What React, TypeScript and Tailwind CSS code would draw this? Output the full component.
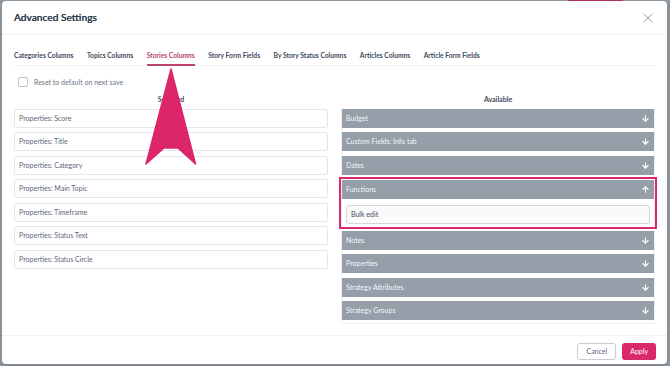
import { ArrowDown, ArrowUp, X } from 'lucide-react'

const tabs = [
  'Categories Columns',
  'Topics Columns',
  'Stories Columns',
  'Story Form Fields',
  'By Story Status Columns',
  'Articles Columns',
  'Article Form Fields',
]

const selectedFields = [
  'Properties: Score',
  'Properties: Title',
  'Properties: Category',
  'Properties: Main Topic',
  'Properties: Timeframe',
  'Properties: Status Text',
  'Properties: Status Circle',
]

const groupsBefore = ['Budget', 'Custom Fields: Info tab', 'Dates']
const groupsAfter = ['Notes', 'Properties', 'Strategy Attributes', 'Strategy Groups']

const GroupBar = ({ label, open = false }: { label: string; open?: boolean }) => (
  <div className="h-[19px] bg-[#959ea9] flex items-center justify-between pl-[4px] pr-[4px] text-[7px] text-white/95">
    <span>{label}</span>
    {open ? (
      <ArrowUp size={9} strokeWidth={3} className="text-white" />
    ) : (
      <ArrowDown size={9} strokeWidth={3} className="text-white" />
    )}
  </div>
)

export default function App() {
  return (
    <div className="relative w-[670px] h-[366px] bg-[#8e96a0] pt-px pl-[2px] font-['Lato','Open_Sans',sans-serif] overflow-hidden">
      {/* page content peeking behind the overlay */}
      <div className="absolute top-0 left-[568px] w-[55px] h-px bg-[#b0306a]" />

      <div className="relative w-[665px] h-[363px] bg-white rounded-[4px] flex flex-col shadow-md">
        {/* Header */}
        <div className="h-[34px] border-b border-[#eef0f2] flex items-center justify-between pl-[12px] pr-[11px]">
          <h1 className="text-[10.2px] font-medium text-[#2e3d4f] [text-shadow:0_0_0.3px_#2e3d4f]">Advanced Settings</h1>
          <X size={16} strokeWidth={1.3} className="text-[#8a93a0]" />
        </div>

        <div className="flex-1 px-[12px]">
          {/* Tabs */}
          <div className="mt-[15px] flex gap-[13.5px] border-b border-[#eef0f2]">
            {tabs.map((tab) => (
              <div
                key={tab}
                className={
                  tab === 'Stories Columns'
                    ? 'pb-[4px] mb-[-1px] border-b-2 border-[#b8436d] text-[#b5446c] text-[6.7px] font-bold leading-[10px]'
                    : 'pb-[5px] text-[#3d4a5c] text-[6.7px] font-bold leading-[10px]'
                }
              >
                {tab}
              </div>
            ))}
          </div>

          {/* Reset checkbox */}
          <label className="mt-[11px] ml-[4px] flex items-center gap-[6px] h-[10px]">
            <span className="w-[10px] h-[10px] border border-[#b9c0c8] rounded-[2px] bg-white" />
            <span className="text-[7px] text-[#6b7482]">Reset to default on next save</span>
          </label>

          {/* Columns */}
          <div className="mt-[7px] grid grid-cols-2 gap-[13px]">
            <div>
              <p className="text-center text-[7px] font-bold text-[#3d4a5c] leading-[10px]">Selected</p>
              <div className="mt-[4.5px] flex flex-col gap-[4.5px]">
                {selectedFields.map((field) => (
                  <div
                    key={field}
                    className="h-[19px] border border-[#e3e6ea] rounded-[2px] flex items-center px-[4px] text-[7px] text-[#5d6778]"
                  >
                    {field}
                  </div>
                ))}
              </div>
            </div>

            <div>
              <p className="text-center text-[7px] font-bold text-[#3d4a5c] leading-[10px]">Available</p>
              <div className="mt-[4.5px] border-x border-b border-[#eef0f2] pb-[3px]">
                <div className="flex flex-col gap-[4.5px]">
                  {groupsBefore.map((g) => (
                    <GroupBar key={g} label={g} />
                  ))}
                </div>

                {/* highlighted group */}
                <div className="mt-[2px] mx-[-3px] border-2 border-[#d9286b] pt-px px-px pb-[3px]">
                  <GroupBar label="Functions" open />
                  <div className="mt-[6px] mx-[4px] h-[19px] bg-[#fafafa] border border-[#d3d7dc] rounded-[3px] flex items-center px-[4px] text-[7px] text-[#3d4a5c]">
                    Bulk edit
                  </div>
                </div>

                <div className="mt-[2px] flex flex-col gap-[4.5px]">
                  {groupsAfter.map((g) => (
                    <GroupBar key={g} label={g} />
                  ))}
                </div>
              </div>
            </div>
          </div>
        </div>

        {/* Footer */}
        <div className="h-[29px] border-t border-[#eef0f2] flex items-start justify-end gap-[6px] pt-[7px] pr-[11px]">
          <button className="h-[17px] px-[8px] border border-[#c8cdd3] rounded-[3px] bg-white text-[7px] text-[#5d6778]">
            Cancel
          </button>
          <button className="h-[17px] px-[8px] rounded-[3px] bg-[#d8296b] text-[7px] text-white">
            Apply
          </button>
        </div>

        {/* annotation arrow */}
        <svg className="absolute left-[140px] top-[66px]" width="58" height="100" viewBox="140 66 58 100">
          <path d="M169 68 L193.5 163 L176 147 L162 147 L144 163 Z" fill="#dc2669" stroke="#dc2669" strokeWidth="1.5" strokeLinejoin="round" />
        </svg>
      </div>
    </div>
  )
}
